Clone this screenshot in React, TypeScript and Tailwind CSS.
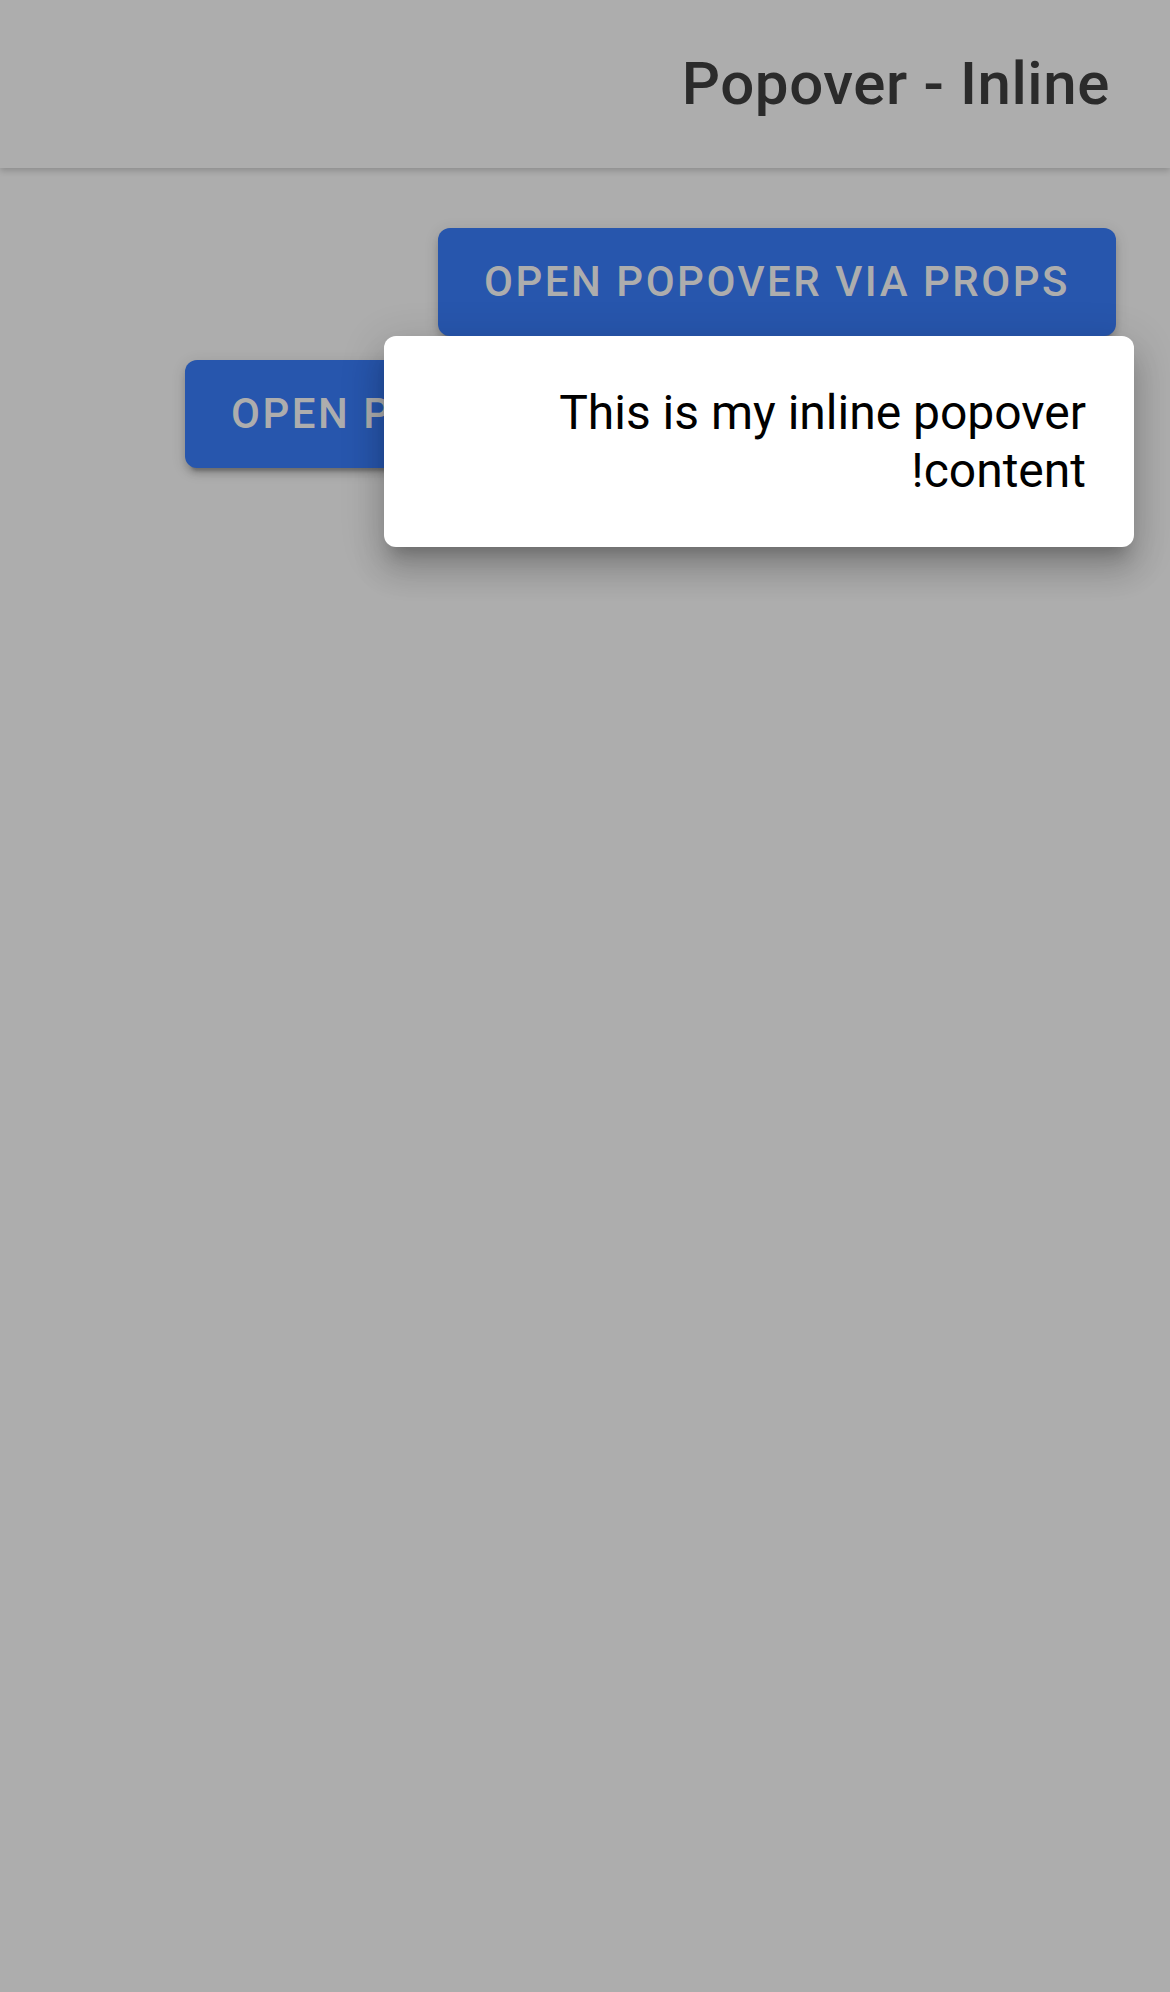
import { useState } from "react";

const buttonClass =
  "inline-flex items-center h-[108px] mx-[6px] my-[12px] px-[46px] rounded-[12px] bg-[#2756ad] text-[#adadad] text-[42px] font-medium uppercase tracking-[0.06em] leading-none whitespace-nowrap shadow-[0_9px_3px_-6px_rgba(0,0,0,0.2),0_6px_6px_0_rgba(0,0,0,0.14),0_3px_15px_0_rgba(0,0,0,0.12)]";

function Header() {
  return (
    <header className="relative z-10 flex items-center h-[168px] px-[60px] bg-[#adadad] shadow-[0_3px_6px_rgba(0,0,0,0.18)]">
      <h1 className="text-[60px] font-medium text-[#2b2b2b] leading-none tracking-[0.01em]">Popover - Inline</h1>
    </header>
  );
}

export default function App() {
  const [open] = useState<boolean>(true);

  return (
    <div dir="rtl" className="min-h-[1992px] bg-[#adadad] font-['Roboto','Liberation_Sans',sans-serif]">
      <Header />
      <main className="relative p-[48px]">
        <div>
          <button className={buttonClass}>Open popover via props</button>
        </div>
        <div>
          <button className={`${buttonClass} w-[931px] justify-end overflow-hidden`}>Open popover via trigger element</button>
        </div>
        {open && (
          <div className="absolute top-[168px] right-[36px] w-[750px] p-[48px] rounded-[12px] bg-white text-black text-[48px] leading-[1.2] shadow-[0_15px_15px_-9px_rgba(0,0,0,0.2),0_24px_30px_3px_rgba(0,0,0,0.14),0_9px_42px_6px_rgba(0,0,0,0.12)]">
            This is my inline popover content!
          </div>
        )}
      </main>
    </div>
  );
}
